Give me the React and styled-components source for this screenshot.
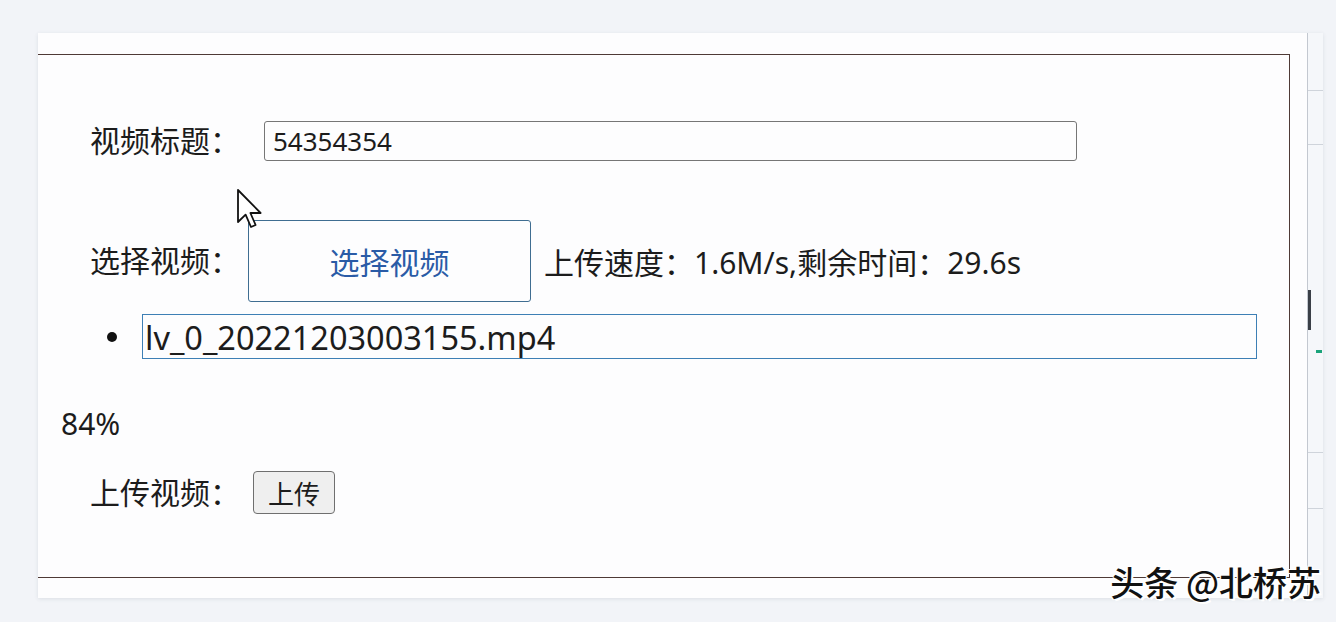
import React from "react";
import styled, { createGlobalStyle } from "styled-components";

const GlobalStyle = createGlobalStyle`
  html, body {
    margin: 0;
    padding: 0;
    background: #f2f4f8;
    font-family: "Noto Sans", "Noto Sans CJK SC", sans-serif;
    color: #1c1c1c;
  }
`;

const Page = styled.div`
  position: relative;
  width: 1336px;
  height: 622px;
  padding: 33px 0 0 38px;
  box-sizing: border-box;
  overflow: hidden;
`;

const Card = styled.div`
  display: flex;
  width: 1285px;
  height: 565px;
  background: #fdfdfe;
  box-shadow: 0 1px 4px rgba(60, 70, 90, 0.12);
`;

const Main = styled.div`
  flex: 1;
  padding: 21px 17px 0 0;
`;

const Panel = styled.div`
  box-sizing: border-box;
  height: 524px;
  border-top: 1px solid #4e3a36;
  border-right: 1px solid #4e3a36;
  border-bottom: 1px solid #4e3a36;
  padding-top: 66px;
`;

const Row = styled.div`
  display: flex;
  align-items: center;
  margin-top: ${(p) => p.$top || 0}px;
  padding-left: ${(p) => p.$indent || 0}px;
  height: ${(p) => p.$h}px;
`;

const Label = styled.span`
  font-size: 30px;
  line-height: 40px;
  white-space: nowrap;
`;

const TitleInput = styled.input`
  box-sizing: border-box;
  width: 813px;
  height: 40px;
  margin-left: 24px;
  padding: 0 8px;
  border: 1px solid #767676;
  border-radius: 3px;
  background: #fdfdfe;
  font-family: "Noto Sans", sans-serif;
  font-size: 26px;
  color: #1c1c1c;
  outline: none;
`;

const PickButton = styled.button`
  box-sizing: border-box;
  width: 283px;
  height: 82px;
  margin-left: 8px;
  border: 1px solid #3f6d91;
  border-radius: 3px;
  background: #fdfdfe;
  color: #2a5ba6;
  font-family: "Noto Sans", "Noto Sans CJK SC", sans-serif;
  font-size: 30px;
  cursor: pointer;
`;

const Speed = styled.span`
  margin-left: 13px;
  font-size: 30px;
  white-space: nowrap;
`;

const Bullet = styled.span`
  width: 10px;
  height: 10px;
  border-radius: 50%;
  background: #111;
`;

const FileName = styled.div`
  box-sizing: border-box;
  width: 1115px;
  height: 45px;
  margin-left: 25px;
  padding-left: 2px;
  border: 1px solid #3d7fb5;
  font-size: 32.5px;
  line-height: 46px;
  white-space: nowrap;
  overflow: visible;
`;

const Percent = styled.div`
  margin-top: 45px;
  padding-left: 23px;
  font-size: 30px;
  line-height: 40px;
`;

const UploadButton = styled.button`
  box-sizing: border-box;
  width: 82px;
  height: 43px;
  margin-left: 13px;
  border: 1px solid #6f6f6f;
  border-radius: 4px;
  background: #efefef;
  color: #1c1c1c;
  font-family: "Noto Sans CJK SC", sans-serif;
  font-size: 26px;
  padding: 0;
`;

const Strip = styled.div`
  width: 15px;
  display: flex;
  flex-direction: column;
  background: #f5f7fa;
  border-left: 1px solid #c3c8d0;
`;

const Segment = styled.div`
  height: ${(p) => p.$h}px;
  border-bottom: ${(p) => (p.$line ? "1px solid #cfd4db" : "none")};
  border-left: ${(p) => (p.$dark ? "3px solid #3a3f47" : "none")};
  position: relative;
`;

const Marker = styled.span`
  position: absolute;
  top: 20px;
  left: 8px;
  width: 6px;
  height: 3px;
  background: #1aa37a;
`;

const Cursor = styled.svg`
  position: absolute;
  left: 237px;
  top: 189px;
`;

const Watermark = styled.div`
  position: absolute;
  right: 15px;
  bottom: 23px;
  font-family: "Noto Sans CJK SC", sans-serif;
  font-size: 34px;
  font-weight: 500;
  line-height: 34px;
  color: #111;
  text-shadow: 2px 2px 0 #fff, -1px -1px 0 #fff, 1px -1px 0 #fff, -1px 1px 0 #fff;
  letter-spacing: 0;
`;

const strip = [
  { h: 57, line: true },
  { h: 54, line: true },
  { h: 146 },
  { h: 40, dark: true },
  { h: 123, marker: true, line: true },
  { h: 55, line: true },
  { h: 90 },
];

export default function App() {
  return (
    <>
      <GlobalStyle />
      <Page>
        <Card>
          <Main>
            <Panel>
              <Row $h={40} $indent={52}>
                <Label>视频标题：</Label>
                <TitleInput defaultValue="54354354" />
              </Row>
              <Row $h={82} $indent={52} $top={59}>
                <Label>选择视频：</Label>
                <PickButton>选择视频</PickButton>
                <Speed>上传速度：1.6M/s,剩余时间：29.6s</Speed>
              </Row>
              <Row $h={45} $indent={69} $top={12}>
                <Bullet />
                <FileName>lv_0_20221203003155.mp4</FileName>
              </Row>
              <Percent>84%</Percent>
              <Row $h={43} $indent={52} $top={27}>
                <Label>上传视频：</Label>
                <UploadButton>上传</UploadButton>
              </Row>
            </Panel>
          </Main>
          <Strip>
            {strip.map((s, i) => (
              <Segment key={i} $h={s.h} $line={s.line} $dark={s.dark}>
                {s.marker && <Marker />}
              </Segment>
            ))}
          </Strip>
        </Card>
        <Cursor width="26" height="40" viewBox="0 0 13 20">
          <path
            d="M0.5 0.5 L0.5 16.5 L4.3 12.8 L7 19 L9.3 18 L6.7 12 L11.8 12 Z"
            fill="#fff"
            stroke="#111"
            strokeWidth="0.9"
            strokeLinejoin="round"
          />
        </Cursor>
        <Watermark>头条 @北桥苏</Watermark>
      </Page>
    </>
  );
}
